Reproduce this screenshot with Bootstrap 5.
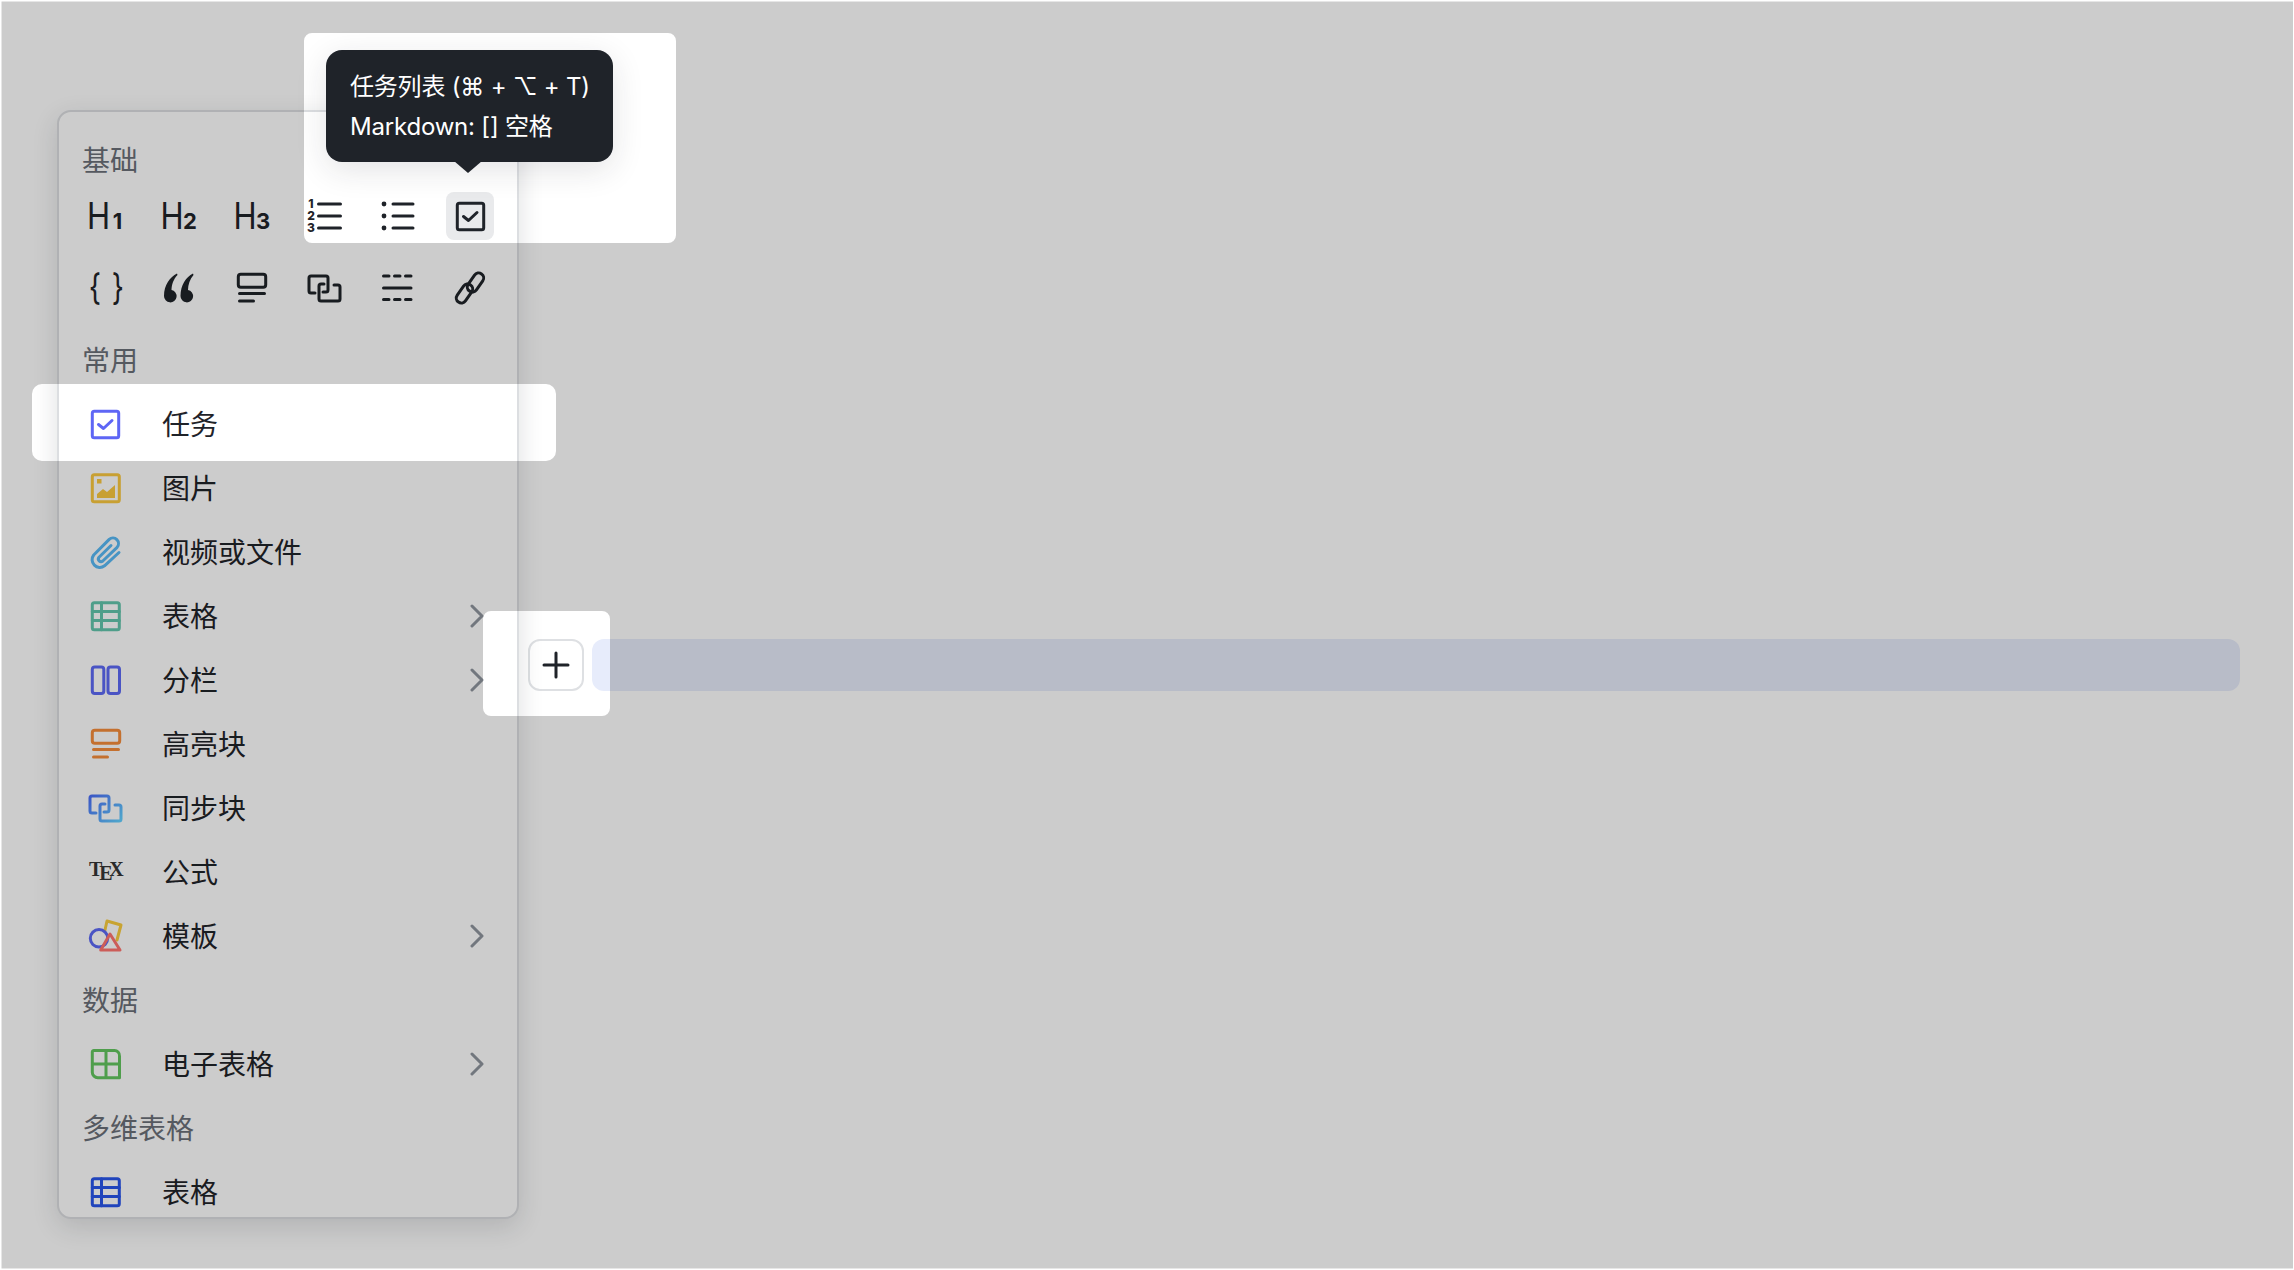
<!DOCTYPE html>
<html lang="zh">
<head>
    <meta charset="UTF-8">
    <meta name="viewport" content="width=device-width, initial-scale=1.0">
    <title>Slash menu</title>
    <link href="https://cdn.jsdelivr.net/npm/bootstrap@5.3.2/dist/css/bootstrap.min.css" rel="stylesheet">
    <style>
        html, body { height: 100%; }
        body {
            width: 2294px;
            height: 1270px;
            overflow: hidden;
            background: #fff;
            color: #1f2329;
            font-family: Inter, "Noto Sans CJK SC", "DejaVu Sans", sans-serif;
            font-size: 28px;
        }
        .stage { width: 2294px; height: 1270px; }

        /* editor line with the add button */
        .editor-line { padding: 639px 54px 0 528px; }
        .add-btn {
            width: 56px;
            height: 52px;
            border: 2px solid #dee0e3;
            border-radius: 12px;
            background: #fff;
        }
        .line-bar {
            height: 52px;
            background: #e7ecfb;
            border-radius: 12px;
        }

        /* slash menu */
        .slash-menu {
            left: 57px;
            top: 110px;
            width: 462px;
            height: 1109px;
            padding-top: 16px;
            background: #fff;
            border: 2px solid #dcdee1;
            border-radius: 14px;
            box-shadow: 0 8px 26px rgba(31, 35, 41, .14);
            overflow: hidden;
        }
        .menu-label {
            height: 64px;
            padding-left: 23px;
            color: #6b7078;
            font-family: "Noto Sans CJK SC", sans-serif;
            line-height: 62px;
        }
        .tool-grid {
            display: grid;
            grid-template-columns: repeat(6, 48px);
            column-gap: 25px;
            row-gap: 24px;
            padding-left: 22px;
            margin-bottom: 16px;
        }
        .tool-cell { width: 48px; height: 48px; border-radius: 8px; }
        .tool-cell.is-active { background: #e9eaec; }
        .menu-row {
            height: 64px;
            padding-left: 22px;
            padding-right: 33px;
            gap: 33px;
            font-family: "Noto Sans CJK SC", sans-serif;
        }
        .menu-row .row-text { flex: 1; padding-bottom: 2px; }
        .ico { stroke-width: 3; fill: none; stroke-linecap: round; stroke-linejoin: round; stroke: currentColor; }
        .ico-h { font-family: Inter, sans-serif; font-weight: 400; font-size: 36.6px; fill: #1f2329; stroke: none; }
        .ico-n { font-family: Inter, sans-serif; font-weight: 700; font-size: 22px; fill: #1f2329; stroke: none; }
        .ico-d { font-family: Inter, sans-serif; font-weight: 800; font-size: 12px; fill: #1f2329; stroke: none; }
        .ico-b { font-family: Inter, sans-serif; font-weight: 400; font-size: 36px; fill: #1f2329; stroke: none; }
        .ico-tex { font-family: "Liberation Serif", serif; font-weight: 700; font-size: 20px; fill: #353535; stroke: none; }
        .chev { color: #8f959e; }

        /* tooltip */
        .hint {
            left: 326px;
            top: 50px;
            width: 287px;
            height: 112px;
            padding: 17px 24px;
            background: #1f2329;
            color: #fff;
            border-radius: 16px;
            font-size: 24px;
            letter-spacing: -.2px;
            line-height: 40px;
            white-space: nowrap;
            box-shadow: 0 8px 32px rgba(31, 35, 41, .12);
        }
        .hint::after {
            content: "";
            position: absolute;
            left: 128px;
            top: 111px;
            border-left: 14px solid transparent;
            border-right: 14px solid transparent;
            border-top: 12px solid #1f2329;
        }

        .dim-layer { left: 0; top: 0; pointer-events: none; }
    </style>
</head>
<body>
<svg width="0" height="0" class="position-absolute">
    <defs>
        <linearGradient id="syncGrad" gradientUnits="userSpaceOnUse" x1="10" y1="10" x2="38" y2="38">
            <stop offset="0" stop-color="#4a6cf7"/>
            <stop offset="1" stop-color="#63cfff"/>
        </linearGradient>
        <symbol id="i-check" viewBox="0 0 48 48">
            <rect x="11.3" y="11.3" width="26.4" height="26.4" rx="2"/>
            <path d="M17.500 24.500l5 4 8.500-8"/>
        </symbol>
        <symbol id="i-callout" viewBox="0 0 48 48">
            <rect x="11.3" y="10.3" width="27.4" height="13" rx="2.5"/>
            <path d="M12.5 29.5h25M12.5 37h14"/>
        </symbol>
        <symbol id="i-sync" viewBox="0 0 48 48">
            <path d="M15 29h-4a2 2 0 0 1-2-2V14a2 2 0 0 1 2-2h15a2 2 0 0 1 2 2v12a2 2 0 0 1-2 2h-3"/>
            <path d="M24 20h-3a2 2 0 0 0-2 2v13a2 2 0 0 0 2 2h17a2 2 0 0 0 2-2V23a2 2 0 0 0-2-2h-4"/>
        </symbol>
        <symbol id="i-table" viewBox="0 0 48 48">
            <rect x="11.3" y="10.8" width="27" height="27" rx="2"/>
            <path d="M11.3 19.5h27M11.3 28.5h27M20.5 10.8v27"/>
        </symbol>
    </defs>
</svg>

<div class="stage position-relative">
    <div class="editor-line d-flex gap-2">
        <div class="add-btn d-flex align-items-center justify-content-center flex-shrink-0">
            <svg width="28" height="28" viewBox="0 0 28 28" class="ico"><path d="M2 14h24M14 2v24"/></svg>
        </div>
        <div class="line-bar flex-grow-1"></div>
    </div>

    <div class="slash-menu position-absolute">
        <div class="menu-label">基础</div>
        <div class="tool-grid">
            <div class="tool-cell"><svg width="48" height="48" viewBox="0 0 48 48"><text class="ico-h" transform="translate(6 37.3) scale(.85 1)">H</text><text class="ico-n" x="36.5" y="37.3" text-anchor="middle">1</text></svg></div>
            <div class="tool-cell"><svg width="48" height="48" viewBox="0 0 48 48"><text class="ico-h" transform="translate(6.5 37.3) scale(.85 1)">H</text><text class="ico-n" x="36" y="37.3" text-anchor="middle">2</text></svg></div>
            <div class="tool-cell"><svg width="48" height="48" viewBox="0 0 48 48"><text class="ico-h" transform="translate(6.5 37.3) scale(.85 1)">H</text><text class="ico-n" x="36" y="37.3" text-anchor="middle">3</text></svg></div>
            <div class="tool-cell"><svg width="48" height="48" viewBox="0 0 48 48" class="ico">
                <text class="ico-d" x="11" y="16" text-anchor="middle">1</text><text class="ico-d" x="11" y="28" text-anchor="middle">2</text><text class="ico-d" x="11" y="40" text-anchor="middle">3</text>
                <path d="M18.5 12h22M18.5 24h22M18.5 36h22"/></svg></div>
            <div class="tool-cell"><svg width="48" height="48" viewBox="0 0 48 48" class="ico">
                <path d="M20 12h20M20 24h20M20 36h20"/>
                <circle cx="11" cy="12" r="2.4" fill="#1f2329" stroke="none"/><circle cx="11" cy="24" r="2.4" fill="#1f2329" stroke="none"/><circle cx="11" cy="36" r="2.4" fill="#1f2329" stroke="none"/></svg></div>
            <div class="tool-cell is-active"><svg width="48" height="48" class="ico"><use href="#i-check"/></svg></div>

            <div class="tool-cell"><svg width="48" height="48" viewBox="0 0 48 48"><text class="ico-b" transform="translate(14 35.500) scale(.8 1)" text-anchor="middle">{</text><text class="ico-b" transform="translate(37 35.500) scale(.8 1)" text-anchor="middle">}</text></svg></div>
            <div class="tool-cell"><svg width="48" height="48" viewBox="0 0 48 48"><path fill="#1f2329" d="M23 9.500C16 13 10 21 10 32a6.300 6.300 0 1 0 7.500-6.100C17.500 21 19.500 15 23.500 11z"/><path fill="#1f2329" d="M39 9.500C32 13 26.500 21 26.500 32a6.300 6.300 0 1 0 7.500-6.100C34 21 36 15 39.500 11z"/></svg></div>
            <div class="tool-cell"><svg width="48" height="48" class="ico"><use href="#i-callout"/></svg></div>
            <div class="tool-cell"><svg width="48" height="48" class="ico"><use href="#i-sync"/></svg></div>
            <div class="tool-cell"><svg width="48" height="48" viewBox="0 0 48 48" class="ico">
                <path d="M10.500 12h5.500M21.500 12h5.500M32.500 12h5.500M10.500 24h27.500M10.500 35.500h5.500M21.500 35.500h5.500M32.500 35.500h5.500"/></svg></div>
            <div class="tool-cell"><svg width="48" height="48" viewBox="0 0 48 48" class="ico">
                <rect x="-5" y="-10.500" width="10" height="21" rx="5" transform="translate(29.500 18.500) rotate(35)"/>
                <rect x="-5" y="-10.500" width="10" height="21" rx="5" transform="translate(18.500 29.500) rotate(35)"/></svg></div>
        </div>

        <div class="menu-label">常用</div>
        <div class="menu-row d-flex align-items-center"><svg width="48" height="48" class="ico" style="color:#5e66f5"><use href="#i-check"/></svg><span class="row-text">任务</span></div>
        <div class="menu-row d-flex align-items-center">
            <svg width="48" height="48" viewBox="0 0 48 48" class="ico" style="color:#fbc83f"><rect x="11.3" y="10.8" width="27" height="27" rx="2"/><path fill="#fbc83f" stroke="none" d="M16 34v-4l6-5 4 3 8-7v13z"/><rect x="16" y="15" width="4.500" height="4.500" fill="#fbc83f" stroke="none"/></svg>
            <span class="row-text">图片</span></div>
        <div class="menu-row d-flex align-items-center">
            <svg width="48" height="48" viewBox="0 0 48 48" class="ico" style="color:#59baf5"><path d="M38 24.500L23.500 37.800a7.700 7.700 0 0 1-10.800-10.800L28.200 11.400a5.600 5.600 0 0 1 7.900 7.900L21.800 33a2.700 2.700 0 0 1-3.800-3.800L30 17.500"/></svg>
            <span class="row-text">视频或文件</span></div>
        <div class="menu-row d-flex align-items-center"><svg width="48" height="48" class="ico" style="color:#63c6ad"><use href="#i-table"/></svg><span class="row-text">表格</span>
            <svg width="14" height="24" viewBox="0 0 14 24" class="ico chev"><path d="M2 2l10 10L2 22"/></svg></div>
        <div class="menu-row d-flex align-items-center">
            <svg width="48" height="48" viewBox="0 0 48 48" class="ico" style="color:#5d6af5"><rect x="11.3" y="11" width="11.500" height="26.500" rx="2.500"/><rect x="27" y="11" width="11.500" height="26.500" rx="2.500"/></svg>
            <span class="row-text">分栏</span>
            <svg width="14" height="24" viewBox="0 0 14 24" class="ico chev"><path d="M2 2l10 10L2 22"/></svg></div>
        <div class="menu-row d-flex align-items-center"><svg width="48" height="48" class="ico" style="color:#f58d3b"><use href="#i-callout"/></svg><span class="row-text">高亮块</span></div>
        <div class="menu-row d-flex align-items-center"><svg width="48" height="48" class="ico" style="color:#4a77ff"><use href="#i-sync" stroke="url(#syncGrad)"/></svg><span class="row-text">同步块</span></div>
        <div class="menu-row d-flex align-items-center">
            <svg width="48" height="48" viewBox="0 0 48 48"><text class="ico-tex" x="8" y="28">T<tspan dx="-3" dy="4">E</tspan><tspan dx="-3.500" dy="-4">X</tspan></text></svg>
            <span class="row-text">公式</span></div>
        <div class="menu-row d-flex align-items-center">
            <svg width="48" height="48" viewBox="0 0 48 48" class="ico"><path stroke="#fbcd3f" d="M24 18l2-9 14 4-4 15"/><circle cx="18" cy="26.300" r="8.700" stroke="#5d6af5"/><path stroke="#ff7570" d="M29 22l10 16H19.700z"/></svg>
            <span class="row-text">模板</span>
            <svg width="14" height="24" viewBox="0 0 14 24" class="ico chev"><path d="M2 2l10 10L2 22"/></svg></div>
        <div class="menu-label">数据</div>
        <div class="menu-row d-flex align-items-center">
            <svg width="48" height="48" viewBox="0 0 48 48" class="ico" style="color:#63c660"><path d="M13 10.500h20a5 5 0 0 1 5.500 5.500v21.700H17a5.500 5.500 0 0 1-5.700-5.500V12a1.500 1.500 0 0 1 1.700-1.500zM25 10.500v27M11.300 24h27"/></svg>
            <span class="row-text">电子表格</span>
            <svg width="14" height="24" viewBox="0 0 14 24" class="ico chev"><path d="M2 2l10 10L2 22"/></svg></div>
        <div class="menu-label">多维表格</div>
        <div class="menu-row d-flex align-items-center"><svg width="48" height="48" class="ico" style="color:#2955ec"><use href="#i-table"/></svg><span class="row-text">表格</span></div>
    </div>

    <div class="hint position-absolute">
        <div>任务列表 (⌘ + ⌥ + T)</div>
        <div>Markdown: [] 空格</div>
    </div>

    <!-- grey veil with the three cut-outs -->
    <svg class="dim-layer position-absolute" width="2294" height="1270" viewBox="0 0 2294 1270">
        <path fill="#000" fill-opacity=".2" fill-rule="evenodd" d="M1.500 1.500H2293V1268.500H1.500Z
            M312 33H668a8 8 0 0 1 8 8V235a8 8 0 0 1-8 8H312a8 8 0 0 1-8-8V41a8 8 0 0 1 8-8Z
            M42 384H546a10 10 0 0 1 10 10V451a10 10 0 0 1-10 10H42a10 10 0 0 1-10-10V394a10 10 0 0 1 10-10Z
            M491 611H602a8 8 0 0 1 8 8V708a8 8 0 0 1-8 8H491a8 8 0 0 1-8-8V619a8 8 0 0 1 8-8Z"/>
    </svg>
</div>

<script src="https://cdn.jsdelivr.net/npm/bootstrap@5.3.2/dist/js/bootstrap.bundle.min.js"></script>
</body>
</html>
